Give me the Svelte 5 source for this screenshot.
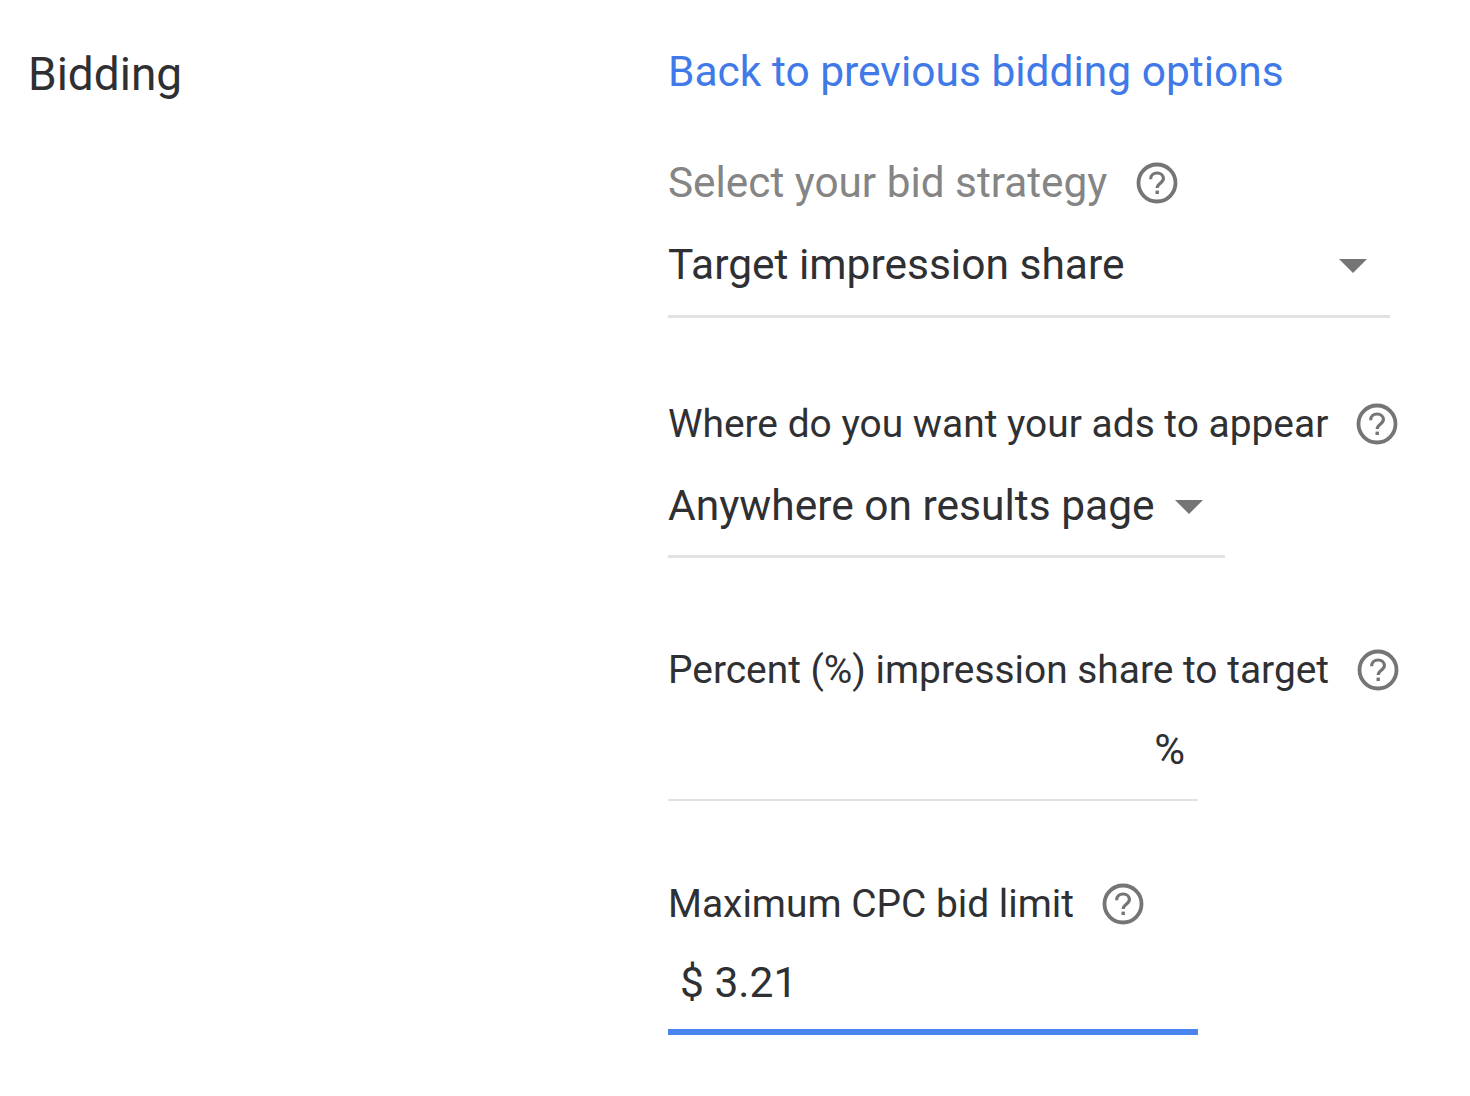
{#snippet help()}
	<svg class="help" width="42" height="42" viewBox="0 0 42 42" fill="none" stroke="#757575">
		<circle cx="21" cy="21" r="18.5" stroke-width="3.8" />
		<path d="M14.6 17.2c0-3.6 2.9-6.2 6.5-6.2s6.3 2.4 6.3 5.6c0 4.6-6.2 4.8-6.2 9.4" stroke-width="3.2" />
		<path d="M21.2 28.6v3.4" stroke-width="3.4" />
	</svg>
{/snippet}

<div class="page">
	<div class="title">Bidding</div>
	<div class="form">
		<a class="back" href="#back">Back to previous bidding options</a>

		<div class="label strategy muted">Select your bid strategy {@render help()}</div>
		<div class="field select wide">
			<span>Target impression share</span>
			<i class="caret"></i>
		</div>

		<div class="label where">Where do you want your ads to appear {@render help()}</div>
		<div class="field select mid">
			<span>Anywhere on results page</span>
			<i class="caret"></i>
		</div>

		<div class="label percent">Percent (%) impression share to target {@render help()}</div>
		<div class="field input thin">
			<span class="suffix">%</span>
		</div>

		<div class="label max">Maximum CPC bid limit {@render help()}</div>
		<div class="field input focused">
			<span class="amount">$ 3.21</span>
		</div>
	</div>
</div>

<style>
	:global(body) {
		background: #fff;
	}
	.page {
		display: flex;
		height: 1096px;
		font-family: Roboto, "Liberation Sans", sans-serif;
		color: #2f3033;
		box-sizing: border-box;
		padding: 46px 0 0 28px;
		overflow: hidden;
	}
	.title {
		width: 640px;
		font-size: 46px;
		line-height: 56px;
	}
	.form {
		display: flex;
		flex-direction: column;
		align-items: flex-start;
	}
	.back {
		font-size: 42.5px;
		line-height: 52px;
		color: #3f7ae8;
		text-decoration: none;
	}
	.label {
		display: flex;
		align-items: center;
		font-size: 38.9px;
		line-height: 50px;
		white-space: nowrap;
	}
	.help {
		flex: none;
		margin-left: 28px;
	}
	.muted {
		font-size: 42.3px;
		color: #858585;
	}
	.muted .help {
		margin-left: 29px;
	}
	.strategy {
		margin-top: 60px;
	}
	.where {
		margin-top: 81px;
	}
	.percent {
		margin-top: 87px;
	}
	.max {
		margin-top: 78px;
	}
	.field {
		display: flex;
		align-items: center;
		box-sizing: border-box;
		font-size: 42.5px;
		border-bottom: 3px solid #e2e2e4;
	}
	.select {
		justify-content: space-between;
		height: 86px;
		padding: 0 23px 16px 0;
		margin-top: 23px;
	}
	.wide {
		width: 722px;
		height: 87px;
		padding-bottom: 17px;
	}
	.mid {
		width: 557px;
		padding-right: 22px;
	}
	.caret {
		display: block;
		width: 0;
		height: 0;
		margin-top: 2px;
		border-left: 14px solid transparent;
		border-right: 14px solid transparent;
		border-top: 14px solid #757575;
	}
	.input {
		width: 530px;
		height: 85px;
		margin-top: 21px;
	}
	.thin {
		border-bottom-width: 2px;
		justify-content: flex-end;
		padding: 0 13px 16px 0;
	}
	.suffix {
		font-size: 42px;
	}
	.focused {
		height: 83px;
		margin-top: 23px;
		padding: 0 0 16px 12px;
		border-bottom: 6px solid #4a85ee;
	}
</style>
